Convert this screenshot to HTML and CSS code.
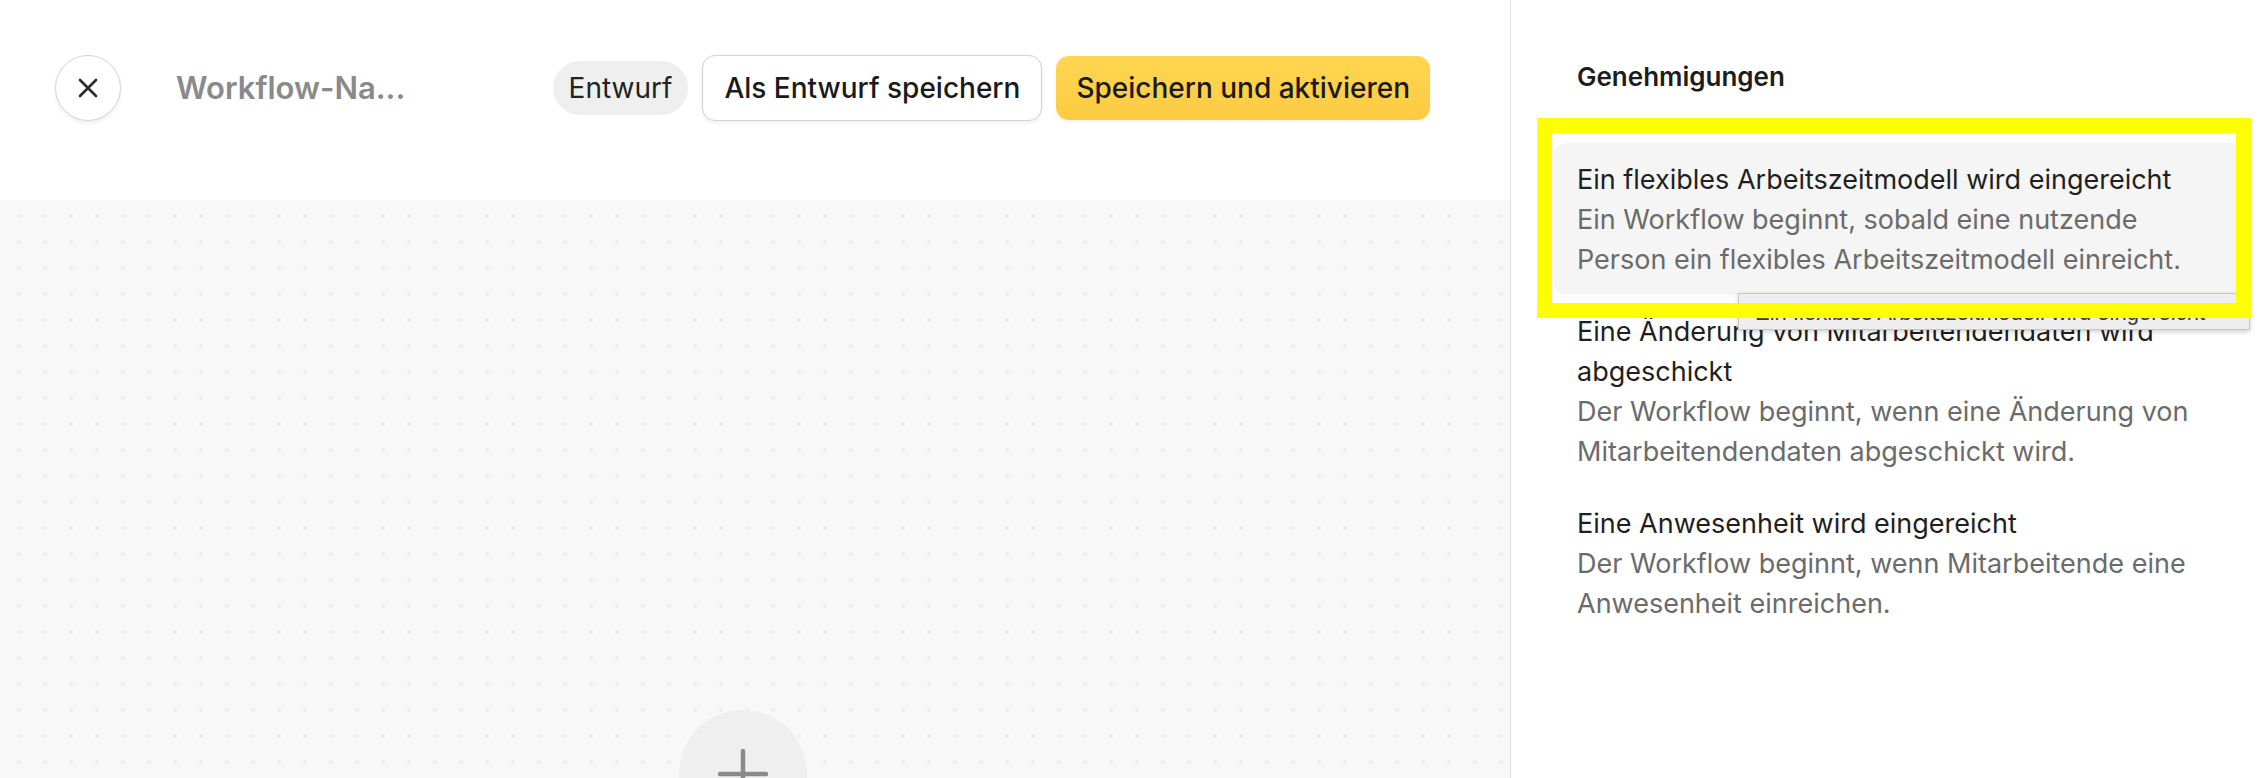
FILE: index.html
```html
<!DOCTYPE html>
<html lang="de">
<head>
  <meta charset="UTF-8" />
  <meta name="viewport" content="width=device-width, initial-scale=1.0"/>
  <title>Workflow bearbeiten</title>
  <link rel="stylesheet" href="styles.css">
</head>
<body>

<div class="editor">

  <!-- Left: header + canvas -->
  <div class="main">
    <div class="topbar">
      <button class="close-btn" aria-label="Schließen">
        <svg width="22" height="22" viewBox="0 0 22 22"><path d="M3 3 L19 19 M19 3 L3 19" stroke="#2b2b2b" stroke-width="2.6" stroke-linecap="round"/></svg>
      </button>
      <div class="wf-name">Workflow-Na...</div>
      <div class="actions">
        <span class="status-chip">Entwurf</span>
        <button class="btn btn-outline">Als Entwurf speichern</button>
        <button class="btn btn-primary">Speichern und aktivieren</button>
      </div>
    </div>

    <div class="canvas">
      <button class="add-node" aria-label="Schritt hinzufügen">
        <svg width="50" height="50" viewBox="0 0 50 50"><path d="M25 2 V48 M2 25 H48" stroke="#8a8a8a" stroke-width="4.5" stroke-linecap="round"/></svg>
      </button>
    </div>
  </div>

  <!-- Right: trigger list -->
  <div class="sidebar">
    <h2 class="side-title">Genehmigungen</h2>

    <div class="trigger-list">
      <div class="trigger hover">
        <div class="trigger-name">Ein flexibles Arbeitszeitmodell wird eingereicht</div>
        <div class="trigger-desc">Ein Workflow beginnt, sobald eine nutzende Person ein flexibles Arbeitszeitmodell einreicht.</div>
      </div>
      <div class="trigger">
        <div class="trigger-name">Eine Änderung von Mitarbeitendendaten wird abgeschickt</div>
        <div class="trigger-desc">Der Workflow beginnt, wenn eine Änderung von Mitarbeitendendaten abgeschickt wird.</div>
      </div>
      <div class="trigger">
        <div class="trigger-name">Eine Anwesenheit wird eingereicht</div>
        <div class="trigger-desc">Der Workflow beginnt, wenn Mitarbeitende eine Anwesenheit einreichen.</div>
      </div>
    </div>

    <!-- native title tooltip + review highlight -->
    <div class="tooltip">Ein flexibles Arbeitszeitmodell wird eingereicht</div>
    <div class="highlight"></div>
  </div>

</div>

</body>
</html>
```

FILE: styles.css
```css
* {
  box-sizing: border-box;
}

body {
  margin: 0;
  font-family: 'Inter', 'Noto Sans', sans-serif;
  background: #fff;
  color: #1f1f1f;
  overflow: hidden;
}

button {
  font-family: inherit;
  cursor: pointer;
}

.editor {
  display: flex;
  width: 100vw;
  height: 100vh;
}

/* ---------- left side ---------- */

.main {
  width: 1511px;
  flex-shrink: 0;
  display: flex;
  flex-direction: column;
  border-right: 1px solid #dedede;
}

.topbar {
  height: 200px;
  flex-shrink: 0;
  display: flex;
  align-items: flex-start;
  padding: 55px 80px 0 55px;
  background: #fff;
}

.close-btn {
  width: 66px;
  height: 66px;
  border-radius: 50%;
  border: 1.5px solid #d5d5d5;
  background: #fff;
  box-shadow: 0 2px 4px rgba(0,0,0,0.07);
  display: flex;
  align-items: center;
  justify-content: center;
  padding: 0;
}

.wf-name {
  margin-left: 55px;
  height: 66px;
  line-height: 66px;
  font-size: 31px;
  font-weight: 600;
  color: #8a8a8a;
}

.actions {
  margin-left: auto;
  display: flex;
  align-items: center;
  gap: 14px;
  height: 66px;
}

.status-chip {
  height: 54px;
  line-height: 54px;
  padding: 0 16px;
  border-radius: 27px;
  background: #efefef;
  font-size: 28px;
  color: #222;
}

.btn {
  height: 66px;
  padding: 0 21px;
  border-radius: 13px;
  font-size: 28px;
  font-weight: 500;
  color: #1a1a1a;
}

.btn-outline {
  background: #fff;
  border: 1.5px solid #d3d3d3;
  box-shadow: 0 2px 4px rgba(0,0,0,0.06);
}

.btn-primary {
  height: 64px;
  padding: 0 20px;
  border: none;
  background: linear-gradient(#ffd650, #fccb42);
  box-shadow: 0 2px 4px rgba(0,0,0,0.06);
}

.canvas {
  flex: 1;
  display: flex;
  justify-content: center;
  padding: 510px 24px 0 0;
  overflow: hidden;
  background-color: #f8f8f8;
  background-image: radial-gradient(circle, #eeeeee 2px, transparent 2.6px);
  background-size: 26px 26px;
  background-position: 6px 3px;
}

.add-node {
  width: 128px;
  height: 128px;
  flex-shrink: 0;
  border-radius: 50%;
  border: none;
  background: #efefef;
  display: flex;
  align-items: center;
  justify-content: center;
  padding: 0;
}

/* ---------- right side ---------- */

.sidebar {
  flex: 1;
  position: relative;
  padding: 59px 16px 0 42px;
  background: #fff;
}

.side-title {
  margin: 0 0 48px 24px;
  font-size: 26px;
  line-height: 36px;
  font-weight: 600;
  color: #1c1c1c;
}

.trigger {
  padding: 17px 24px 15px;
  border-radius: 14px;
  font-size: 27px;
  line-height: 40px;
}

.trigger.hover {
  background: #f5f5f5;
}

.trigger-name {
  color: #1f1f1f;
}

.trigger-desc {
  color: #6b6b6b;
}

.tooltip {
  position: absolute;
  left: 227px;
  top: 293px;
  width: 512px;
  height: 37px;
  padding-left: 16px;
  line-height: 37px;
  font-family: 'Liberation Sans', Arial, sans-serif;
  font-size: 22px;
  white-space: nowrap;
  color: #3a3a3a;
  background: #eeeeee;
  border: 1px solid #c6c6c6;
  box-shadow: 0 2px 5px rgba(0,0,0,0.18);
}

.highlight {
  position: absolute;
  left: 26px;
  top: 118px;
  width: 714px;
  height: 200px;
  border: 15px solid #ffff00;
}
```
